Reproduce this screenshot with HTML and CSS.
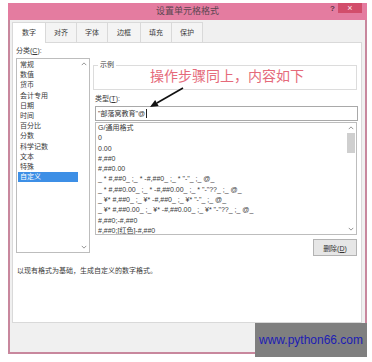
FILE: index.html
```html
<!DOCTYPE html>
<html lang="zh-CN">
<head>
  <meta charset="UTF-8" />
  <title>设置单元格格式</title>
  <link rel="stylesheet" href="styles.css">
</head>
<body>
  <div class="window">
    <div class="titlebar">
      <span></span>
      <span class="title">设置单元格格式</span>
      <div class="controls">
        <span class="help">?</span>
        <span class="close">×</span>
      </div>
    </div>
    <div class="frame">
      <div class="tabs">
        <span class="tab active">数字</span>
        <span class="tab">对齐</span>
        <span class="tab">字体</span>
        <span class="tab">边框</span>
        <span class="tab">填充</span>
        <span class="tab">保护</span>
      </div>
      <div class="panel">
        <div class="columns">
          <div class="col-left">
            <div class="label">分类(<u>C</u>):</div>
            <div class="listbox categories">
              <ul class="items">
                <li>常规</li>
                <li>数值</li>
                <li>货币</li>
                <li>会计专用</li>
                <li>日期</li>
                <li>时间</li>
                <li>百分比</li>
                <li>分数</li>
                <li>科学记数</li>
                <li>文本</li>
                <li>特殊</li>
                <li class="selected">自定义</li>
              </ul>
              <div class="scrollbar">
                <svg class="arrow" viewBox="0 0 8 5"><polyline points="1,4 4,1 7,4" /></svg>
                <span class="track"></span>
                <svg class="arrow" viewBox="0 0 8 5"><polyline points="1,1 4,4 7,1" /></svg>
              </div>
            </div>
          </div>
          <div class="col-right">
            <fieldset class="sample"><legend>示例</legend></fieldset>
            <div class="label">类型(<u>T</u>):</div>
            <div class="input">"部落窝教育"@<span class="caret"></span></div>
            <div class="listbox formats">
              <ul class="items">
                <li>G/通用格式</li>
                <li>0</li>
                <li>0.00</li>
                <li>#,##0</li>
                <li>#,##0.00</li>
                <li>_ * #,##0_ ;_ * -#,##0_ ;_ * "-"_ ;_ @_</li>
                <li>_ * #,##0.00_ ;_ * -#,##0.00_ ;_ * "-"??_ ;_ @_</li>
                <li>_ ¥* #,##0_ ;_ ¥* -#,##0_ ;_ ¥* "-"_ ;_ @_</li>
                <li>_ ¥* #,##0.00_ ;_ ¥* -#,##0.00_ ;_ ¥* "-"??_ ;_ @_</li>
                <li>#,##0;-#,##0</li>
                <li>#,##0;[红色]-#,##0</li>
              </ul>
              <div class="scrollbar">
                <svg class="arrow" viewBox="0 0 8 5"><polyline points="1,4 4,1 7,4" /></svg>
                <span class="thumb"></span>
                <span class="track"></span>
                <svg class="arrow" viewBox="0 0 8 5"><polyline points="1,1 4,4 7,1" /></svg>
              </div>
            </div>
            <div class="actions">
              <button class="btn">删除(<u>D</u>)</button>
            </div>
          </div>
        </div>
        <p class="desc">以现有格式为基础，生成自定义的数字格式。</p>
      </div>
      <div class="footer"></div>
    </div>

    <!-- annotation drawn over the dialog -->
    <div class="note">操作步骤同上，内容如下</div>
    <svg class="note-arrow" viewBox="0 0 40 26" width="40" height="26">
      <line x1="35" y1="3" x2="8.9" y2="18" />
      <polygon points="2,22 10.65,21.04 7.15,14.96" />
    </svg>
  </div>
  <div class="watermark">www.python66.com</div>
</body>
</html>
```

FILE: styles.css
```css
* { box-sizing: border-box; }
body {
  margin: 0;
  background: #fff;
  font-family: "Liberation Sans", "Noto Sans CJK SC", sans-serif;
  font-size: 7px;
  color: #3a3a3a;
}
.window {
  position: relative;
  width: 359px;
  margin: 3px 0 0 8px;
}
.titlebar {
  height: 17px;
  background: #e47ca0;
  display: grid;
  grid-template-columns: 1fr auto 1fr;
  align-items: center;
}
.title {
  font-size: 9px;
  color: #5a4550;
  line-height: 17px;
}
.controls {
  display: flex;
  justify-content: flex-end;
  align-items: flex-start;
  align-self: start;
  gap: 3px;
  margin-right: 5px;
}
.help {
  font-size: 8px;
  font-weight: bold;
  color: #5a3344;
  line-height: 9px;
  padding-top: 1px;
}
.close {
  width: 24px;
  height: 10px;
  background: #d24d6b;
  color: #fbe3ea;
  font-size: 9px;
  line-height: 10px;
  text-align: center;
}
.frame {
  height: 334px;
  border: 2px solid #c8879d;
  border-top: 0;
  background: #f0f0f0;
  display: flex;
  flex-direction: column;
}
.tabs {
  display: flex;
  margin: 2px 0 0 2px;
  height: 20px;
}
.tab {
  width: 32px;
  height: 20px;
  line-height: 20px;
  text-align: center;
  background: #f4f4f4;
  border: 1px solid #d9d9d9;
  border-bottom: 0;
  margin-right: -1px;
}
.tab.active {
  width: 34px;
  background: #fff;
  height: 21px;
  position: relative;
  z-index: 1;
}
.tab:nth-child(3), .tab:nth-child(5), .tab:nth-child(6) { width: 32px; }
.tab:nth-child(4) { width: 34px; }
.panel {
  height: 281px;
  margin: 0 3px 0 2px;
  background: #fff;
  border: 1px solid #d9d9d9;
  padding: 3px 4px 0 3px;
}
.columns {
  display: grid;
  grid-template-columns: 74px 262px;
  column-gap: 5px;
}
.label {
  line-height: 10px;
  height: 10px;
}
.listbox {
  border: 1px solid #bdbdbd;
  display: flex;
  background: #fff;
}
.items {
  list-style: none;
  margin: 0;
  padding: 1px 0 0;
  flex: 1;
  overflow: hidden;
  white-space: nowrap;
}
.categories {
  margin-top: 2px;
  height: 195px;
}
.categories li {
  line-height: 10.2px;
  height: 10.2px;
  margin: 0 1px;
  padding-left: 2px;
}
.categories li.selected {
  background: #3d8fe6;
  color: #fff;
}
.scrollbar {
  width: 10px;
  display: flex;
  flex-direction: column;
  align-items: center;
  padding: 3px 0;
}
.scrollbar .track { flex: 1; }
.arrow {
  width: 6px;
  height: 4px;
  fill: none;
  stroke: #8a8a8a;
  stroke-width: 1.2;
}
.thumb {
  width: 8px;
  height: 20px;
  margin-top: 3px;
  background: #cfcfcf;
}
.sample {
  margin: 14px 0 0 -2px;
  padding: 0;
  height: 30px;
  border: 1px solid #dcdcdc;
}
.sample legend {
  margin-left: 4px;
  padding: 0 2px;
  line-height: 10px;
}
.col-right .label { margin-top: 4px; }
.input {
  margin: 2px -1px 0 0;
  height: 15px;
  border: 1px solid #a9a9a9;
  padding-left: 2px;
  line-height: 13px;
  color: #333;
  display: flex;
  align-items: center;
}
.caret {
  width: 1px;
  height: 9px;
  background: #222;
  margin-left: 1px;
}
.formats {
  margin-top: 1px;
  height: 113px;
}
.formats .items { padding-top: 0; }
.formats li {
  line-height: 10.3px;
  height: 10.3px;
  padding-left: 2px;
}
.actions {
  display: flex;
  justify-content: flex-end;
  margin-top: 4px;
}
.btn {
  width: 44px;
  height: 17px;
  padding: 0;
  font: inherit;
  color: #333;
  background: #e6e6e6;
  border: 1px solid #b3b3b3;
}
.desc {
  margin: 10px 0 0 1px;
  line-height: 10px;
}
.footer { flex: 1; }
.note {
  position: absolute;
  left: 142px;
  top: 64px;
  font-family: "Noto Sans CJK SC", sans-serif;
  font-size: 14px;
  line-height: 16px;
  color: #e56a7a;
  white-space: nowrap;
}
.note-arrow {
  position: absolute;
  left: 140px;
  top: 82px;
  pointer-events: none;
}
.note-arrow line {
  stroke: #111;
  stroke-width: 1.6;
}
.note-arrow polygon { fill: #111; }
.watermark {
  position: absolute;
  left: 255px;
  top: 323px;
  width: 112px;
  height: 34px;
  background: #7f7f7f;
  color: #1c1cb4;
  font-size: 12px;
  line-height: 34px;
  text-align: center;
}
```
